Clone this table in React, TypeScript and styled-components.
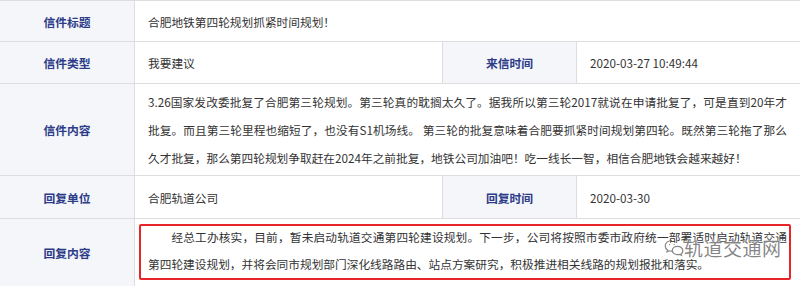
import React from 'react'
import styled, { createGlobalStyle } from 'styled-components'

const BORDER = '#dddddd'
const LABEL_BG = '#f5f6fa'
const LABEL_TEXT = '#2c3c88'
const TEXT = '#333333'

const GlobalStyle = createGlobalStyle`
  html, body {
    margin: 0;
    padding: 0;
    background: #ffffff;
  }
  body {
    font-family: "Noto Sans CJK SC", "Noto Sans", sans-serif;
  }
`

const Page = styled.div`
  position: relative;
  width: 800px;
  height: 286px;
  overflow: hidden;
`

const Table = styled.div`
  display: grid;
  grid-template-columns: 134px 307px 133px 1fr;
  grid-template-rows: 40px 41px 91px 42px 67px;
  gap: 1px;
  background: ${BORDER};
  border-top: 1px solid ${BORDER};
`

const Label = styled.div`
  display: flex;
  align-items: center;
  justify-content: center;
  background: ${LABEL_BG};
  color: ${LABEL_TEXT};
  font-size: 11.8px;
  font-weight: bold;
`

const Value = styled.div<{ $span?: number }>`
  grid-column: span ${(p) => p.$span ?? 1};
  display: flex;
  align-items: center;
  padding-left: 13px;
  background: #ffffff;
  color: ${TEXT};
  font-size: 11.7px;
`

const Content = styled.div`
  grid-column: span 3;
  display: flex;
  flex-direction: column;
  justify-content: center;
  padding: 0 13px;
  background: #ffffff;
  color: ${TEXT};
  font-size: 11.7px;
  line-height: 28px;
`

const Line = styled.span<{ $justify?: boolean; $indent?: boolean }>`
  display: block;
  white-space: nowrap;
  text-align: ${(p) => (p.$justify ? 'justify' : 'left')};
  text-align-last: ${(p) => (p.$justify ? 'justify' : 'left')};
  text-indent: ${(p) => (p.$indent ? '2em' : '0')};
`

const ReplyCell = styled.div`
  grid-column: span 3;
  padding: 5px 9px 6px 4px;
  background: #ffffff;
`

const ReplyBox = styled.div`
  height: 100%;
  box-sizing: border-box;
  border: 2px solid #e8262a;
  border-radius: 2px;
  padding: 0 2px 0 7px;
  color: ${TEXT};
  font-size: 11.7px;
  line-height: 27px;
`

const ReplyText = styled.div`
  margin-top: -3px;
`

const Watermark = styled.div`
  position: absolute;
  left: 664px;
  top: 234px;
  display: flex;
  align-items: center;
  color: rgba(100, 100, 100, 0.78);
  font-size: 19px;
  letter-spacing: 0.5px;
  text-shadow: 0 0 2px #ffffff, 0 0 1px #ffffff;
  pointer-events: none;
`

const WechatMark = () => (
  <svg width="20" height="17" viewBox="0 0 20 17" fill="none" stroke="rgba(100,100,100,0.78)" strokeWidth="1.2">
    <path d="M8 1.5c-3.9 0-6.8 2.5-6.8 5.4 0 1.7.9 3.1 2.4 4.1l-.6 1.9 2.2-1.1c.9.3 1.8.4 2.8.4" />
    <circle cx="5.6" cy="5.6" r="0.7" fill="rgba(100,100,100,0.78)" stroke="none" />
    <circle cx="10.2" cy="5.6" r="0.7" fill="rgba(100,100,100,0.78)" stroke="none" />
    <path d="M13.6 7.4c3 0 5.3 2 5.3 4.3 0 1.3-.7 2.4-1.8 3.2l.4 1.4-1.7-.9c-.7.2-1.4.3-2.2.3-3 0-5.3-2-5.3-4.3s2.3-4 5.3-4z" />
  </svg>
)

export default function App() {
  return (
    <Page>
      <GlobalStyle />
      <Table>
        <Label>信件标题</Label>
        <Value $span={3}>合肥地铁第四轮规划抓紧时间规划！</Value>

        <Label>信件类型</Label>
        <Value>我要建议</Value>
        <Label>来信时间</Label>
        <Value>2020-03-27 10:49:44</Value>

        <Label>信件内容</Label>
        <Content>
          <Line $justify>
            3.26国家发改委批复了合肥第三轮规划。第三轮真的耽搁太久了。据我所以第三轮2017就说在申请批复了，可是直到20年才
          </Line>
          <Line $justify>
            批复。而且第三轮里程也缩短了，也没有S1机场线。 第三轮的批复意味着合肥要抓紧时间规划第四轮。既然第三轮拖了那么
          </Line>
          <Line>
            久才批复，那么第四轮规划争取赶在2024年之前批复，地铁公司加油吧！吃一线长一智，相信合肥地铁会越来越好！
          </Line>
        </Content>

        <Label>回复单位</Label>
        <Value>合肥轨道公司</Value>
        <Label>回复时间</Label>
        <Value>2020-03-30</Value>

        <Label>回复内容</Label>
        <ReplyCell>
          <ReplyBox>
            <ReplyText>
              <Line $justify $indent>
                经总工办核实，目前，暂未启动轨道交通第四轮建设规划。下一步，公司将按照市委市政府统一部署适时启动轨道交通
              </Line>
              <Line>
                第四轮建设规划，并将会同市规划部门深化线路路由、站点方案研究，积极推进相关线路的规划报批和落实。
              </Line>
            </ReplyText>
          </ReplyBox>
        </ReplyCell>
      </Table>
      <Watermark>
        <WechatMark />
        <span>轨道交通网</span>
      </Watermark>
    </Page>
  )
}
